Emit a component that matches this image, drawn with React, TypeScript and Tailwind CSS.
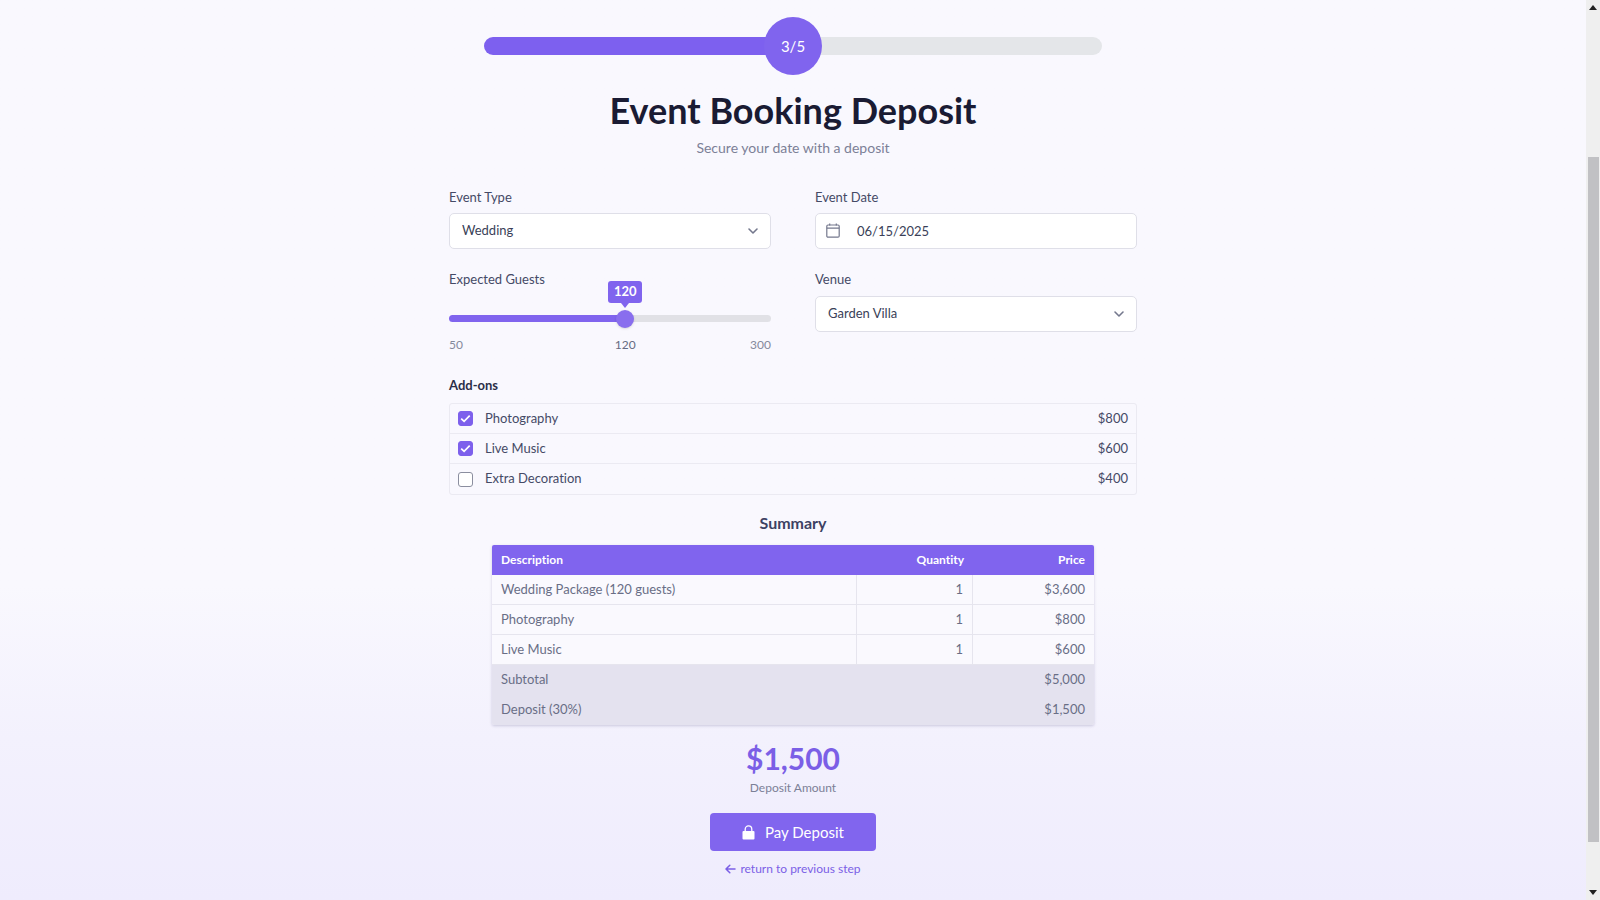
import { useState } from "react";
import type { ReactNode } from "react";

const SLIDER_KNEE = 55;

function guestsAt(position: number) {
  return position <= SLIDER_KNEE
    ? Math.round(50 + (position / SLIDER_KNEE) * 70)
    : Math.round(120 + ((position - SLIDER_KNEE) / (100 - SLIDER_KNEE)) * 180);
}

const money = (n: number) => "$" + n.toLocaleString("en-US");

const addOns = [
  { id: "photo", name: "Photography", price: 800 },
  { id: "music", name: "Live Music", price: 600 },
  { id: "decor", name: "Extra Decoration", price: 400 },
];

function Field({ id, label, children }: { id: string; label: string; children: ReactNode }) {
  return (
    <div>
      <label htmlFor={id} className="block text-[13px] leading-5 text-[#454a66]">
        {label}
      </label>
      {children}
    </div>
  );
}

function SelectBox({ id, options }: { id: string; options: string[] }) {
  return (
    <div className="relative">
      <select
        id={id}
        className="block h-9 w-full appearance-none rounded-[5px] border border-[#dfdfe8] bg-white px-3 text-[13px] text-[#3a3f58] outline-none"
      >
        {options.map((o) => (
          <option key={o}>{o}</option>
        ))}
      </select>
      <svg
        viewBox="0 0 12 12"
        className="pointer-events-none absolute top-3 right-3 size-3 fill-none stroke-[#74788d] stroke-[1.6]"
        strokeLinecap="round"
        strokeLinejoin="round"
      >
        <path d="M2 4l4 4 4-4" />
      </svg>
    </div>
  );
}

function GuestSlider() {
  const [position, setPosition] = useState(SLIDER_KNEE);
  const guests = guestsAt(position);
  const left = `calc(9px + (100% - 18px) * ${position / 100})`;
  return (
    <div className="relative pt-6">
      <output
        htmlFor="guests"
        style={{ left }}
        className="absolute -top-2.5 flex h-[22px] w-[34px] -translate-x-1/2 items-center justify-center rounded-[3px] bg-[#8064ee] text-[13px] font-bold text-white"
      >
        {guests}
        <svg viewBox="0 0 8 5" className="absolute top-full h-[5px] w-2 fill-[#8064ee]">
          <path d="M0 0h8L4 5z" />
        </svg>
      </output>
      <input
        id="guests"
        type="range"
        min={0}
        max={100}
        value={position}
        aria-valuetext={`${guests} guests`}
        onChange={(e) => setPosition(Number(e.target.value))}
        style={{
          backgroundImage: `linear-gradient(to right, #8064ee ${position}%, #e1e1e6 ${position}%)`,
        }}
        className="block h-[7px] w-full appearance-none rounded-full outline-none [&::-webkit-slider-thumb]:size-[18px] [&::-webkit-slider-thumb]:appearance-none [&::-webkit-slider-thumb]:rounded-full [&::-webkit-slider-thumb]:bg-[#896eee] [&::-webkit-slider-thumb]:shadow-sm"
      />
      <div className="relative mt-[13px] flex justify-between text-xs leading-5 text-[#85899c]">
        <span>50</span>
        <span style={{ left }} className="absolute -translate-x-1/2 text-[#666b82]">
          {guests}
        </span>
        <span>300</span>
      </div>
    </div>
  );
}

function ScrollRail() {
  return (
    <div aria-hidden="true" className="flex h-screen w-3.5 shrink-0 flex-col items-center bg-[#efefef] py-1">
      <svg viewBox="0 0 8 5" className="mt-px h-[5px] w-2 fill-[#222]">
        <path d="M4 0l4 5H0z" />
      </svg>
      <div className="flex w-full flex-1 flex-col items-center">
        <div className="flex-[147]" />
        <div className="w-[11px] flex-[684] bg-[#c1c1c4]" />
        <div className="flex-[48]" />
      </div>
      <svg viewBox="0 0 8 5" className="mb-px h-[5px] w-2 fill-[#222]">
        <path d="M0 0h8L4 5z" />
      </svg>
    </div>
  );
}

export default function App() {
  const [picked, setPicked] = useState<string[]>(["photo", "music"]);
  const toggle = (id: string) =>
    setPicked((p) => (p.includes(id) ? p.filter((x) => x !== id) : [...p, id]));

  const lines = [
    { name: "Wedding Package (120 guests)", price: 3600 },
    ...addOns.filter((a) => picked.includes(a.id)),
  ];
  const subtotal = lines.reduce((sum, l) => sum + l.price, 0);
  const deposit = subtotal * 0.3;

  return (
    <div className="flex min-h-screen bg-linear-to-b from-[#f9f8fe] from-65% via-[#f3f1fd] via-82% to-[#efecfd] font-['Lato','Liberation_Sans',sans-serif] [font-variant-ligatures:none]">
      <main className="flex min-w-0 flex-1 flex-col items-center px-6 pt-[17px] pb-5">
        <div
          role="progressbar"
          aria-label="Booking progress"
          aria-valuemin={0}
          aria-valuemax={5}
          aria-valuenow={3}
          className="flex w-full max-w-[618px] items-center"
        >
          <div className="h-[18px] flex-1 rounded-l-full bg-[#7d60ef]" />
          <div className="z-10 -mx-1 flex size-[58px] items-center justify-center rounded-full bg-[#8064ee] text-[15px] text-white">
            3/5
          </div>
          <div className="h-[18px] flex-1 rounded-r-full bg-[#e4e6e9]" />
        </div>

        <h1 className="mt-[11px] text-4xl leading-12 font-bold text-[#1a1b33]">Event Booking Deposit</h1>
        <p className="mt-1 text-sm leading-5 text-[#7c8097]">Secure your date with a deposit</p>

        <form className="mt-[29px] flex w-full max-w-[688px] flex-col items-center" onSubmit={(e) => e.preventDefault()}>
          <div className="grid w-full grid-cols-2 gap-x-11 gap-y-5">
            <Field id="event-type" label="Event Type">
              <div className="mt-1.5">
                <SelectBox id="event-type" options={["Wedding", "Birthday", "Conference"]} />
              </div>
            </Field>
            <Field id="event-date" label="Event Date">
              <div className="relative mt-1.5">
                <input
                  id="event-date"
                  type="text"
                  defaultValue="06/15/2025"
                  className="block h-9 w-full rounded-[5px] border border-[#dfdfe8] bg-white pr-3 pl-[41px] text-[13px] text-[#3a3f58] outline-none"
                />
                <svg
                  viewBox="0 0 14 15"
                  className="pointer-events-none absolute top-2.5 left-[11px] h-[15px] w-3.5 fill-none stroke-[#74788d] stroke-[1.2]"
                >
                  <rect x="0.8" y="2" width="12.4" height="12.2" rx="1.2" />
                  <path d="M0.8 5.2h12.4M3.7 0.4v2M10.3 0.4v2" />
                </svg>
              </div>
            </Field>
            <Field id="guests" label="Expected Guests">
              <div className="mt-0.5">
                <GuestSlider />
              </div>
            </Field>
            <Field id="venue" label="Venue">
              <div className="mt-[7px]">
                <SelectBox id="venue" options={["Garden Villa", "Grand Hall", "Beach House"]} />
              </div>
            </Field>
          </div>

          <fieldset className="mt-5 w-full">
            <legend className="text-[13px] leading-5 font-bold text-[#2b2e48]">Add-ons</legend>
            <div className="mt-2 divide-y divide-[#ebeaf2] rounded-[3px] border border-[#ebeaf2]">
              {addOns.map((a) => (
                <label key={a.id} className="flex h-[30px] items-center px-2 text-[13px] text-[#454a66]">
                  <span className="relative mr-3 flex size-[15px]">
                    <input
                      type="checkbox"
                      checked={picked.includes(a.id)}
                      onChange={() => toggle(a.id)}
                      className="peer size-[15px] appearance-none rounded-[3px] border border-[#8b8e9f] bg-white checked:border-[#7d60ec] checked:bg-[#7d60ec]"
                    />
                    <svg
                      viewBox="0 0 15 15"
                      className="pointer-events-none absolute inset-0 hidden size-[15px] fill-none stroke-white stroke-[1.7] peer-checked:block"
                    >
                      <path d="M3.2 7.6l2.9 2.7 5.6-5.6" />
                    </svg>
                  </span>
                  <span className="flex-1">{a.name}</span>
                  <span>{money(a.price)}</span>
                </label>
              ))}
            </div>
          </fieldset>

          <h2 className="mt-4 text-base leading-6 font-bold text-[#3d4263]">Summary</h2>
          <table className="mt-2.5 w-full max-w-[602px] table-fixed border-separate border-spacing-0 overflow-hidden rounded-[2px] text-[13px] text-[#696e86] shadow-[0_1px_3px_rgba(60,50,110,0.22)]">
            <colgroup>
              <col />
              <col className="w-[116px]" />
              <col className="w-[121px]" />
            </colgroup>
            <thead className="bg-[#8064ee] text-xs text-white">
              <tr className="h-[30px]">
                <th scope="col" className="px-[9px] text-left font-bold">Description</th>
                <th scope="col" className="px-[9px] text-right font-bold">Quantity</th>
                <th scope="col" className="px-[9px] text-right font-bold">Price</th>
              </tr>
            </thead>
            <tbody className="bg-[#faf9fe]">
              {lines.map((l) => (
                <tr key={l.name} className="h-[30px]">
                  <td className="border-r border-b border-[#e6e5ee] px-[9px]">{l.name}</td>
                  <td className="border-r border-b border-[#e6e5ee] px-[9px] text-right">1</td>
                  <td className="border-b border-[#e6e5ee] px-[9px] text-right">{money(l.price)}</td>
                </tr>
              ))}
            </tbody>
            <tfoot className="bg-[#e4e2ef]">
              <tr className="h-[30px]">
                <td colSpan={2} className="px-[9px]">Subtotal</td>
                <td className="px-[9px] text-right">{money(subtotal)}</td>
              </tr>
              <tr className="h-[30px]">
                <td colSpan={2} className="px-[9px]">Deposit (30%)</td>
                <td className="px-[9px] text-right">{money(deposit)}</td>
              </tr>
            </tfoot>
          </table>

          <p className="mt-[15px] text-3xl leading-9 font-bold text-[#7b5fe6]">{money(deposit)}</p>
          <p className="mt-0.5 text-xs leading-5 text-[#7c8097]">Deposit Amount</p>
          <button
            type="submit"
            className="mt-[15px] flex h-[38px] items-center justify-center gap-2.5 rounded-[4px] bg-[#8165ee] px-8 text-[15px] text-white"
          >
            <svg viewBox="0 0 13 15" className="h-[15px] w-[13px]">
              <rect x="0.5" y="6" width="12" height="8.6" rx="1" fill="#fff" />
              <path d="M3.2 6.4V4.2a3.3 3.3 0 0 1 6.6 0v2.2" fill="none" stroke="#fff" strokeWidth="1.3" />
            </svg>
            Pay Deposit
          </button>
          <a href="#previous" className="mt-2 flex items-center gap-1 text-xs leading-5 text-[#7b5fe6]">
            <svg
              viewBox="0 0 11 10"
              className="h-2.5 w-[11px] fill-none stroke-current stroke-[1.5]"
              strokeLinecap="round"
              strokeLinejoin="round"
            >
              <path d="M10 5H1.2M4.8 1.2L1 5l3.8 3.8" />
            </svg>
            return to previous step
          </a>
        </form>
      </main>
      <ScrollRail />
    </div>
  );
}
